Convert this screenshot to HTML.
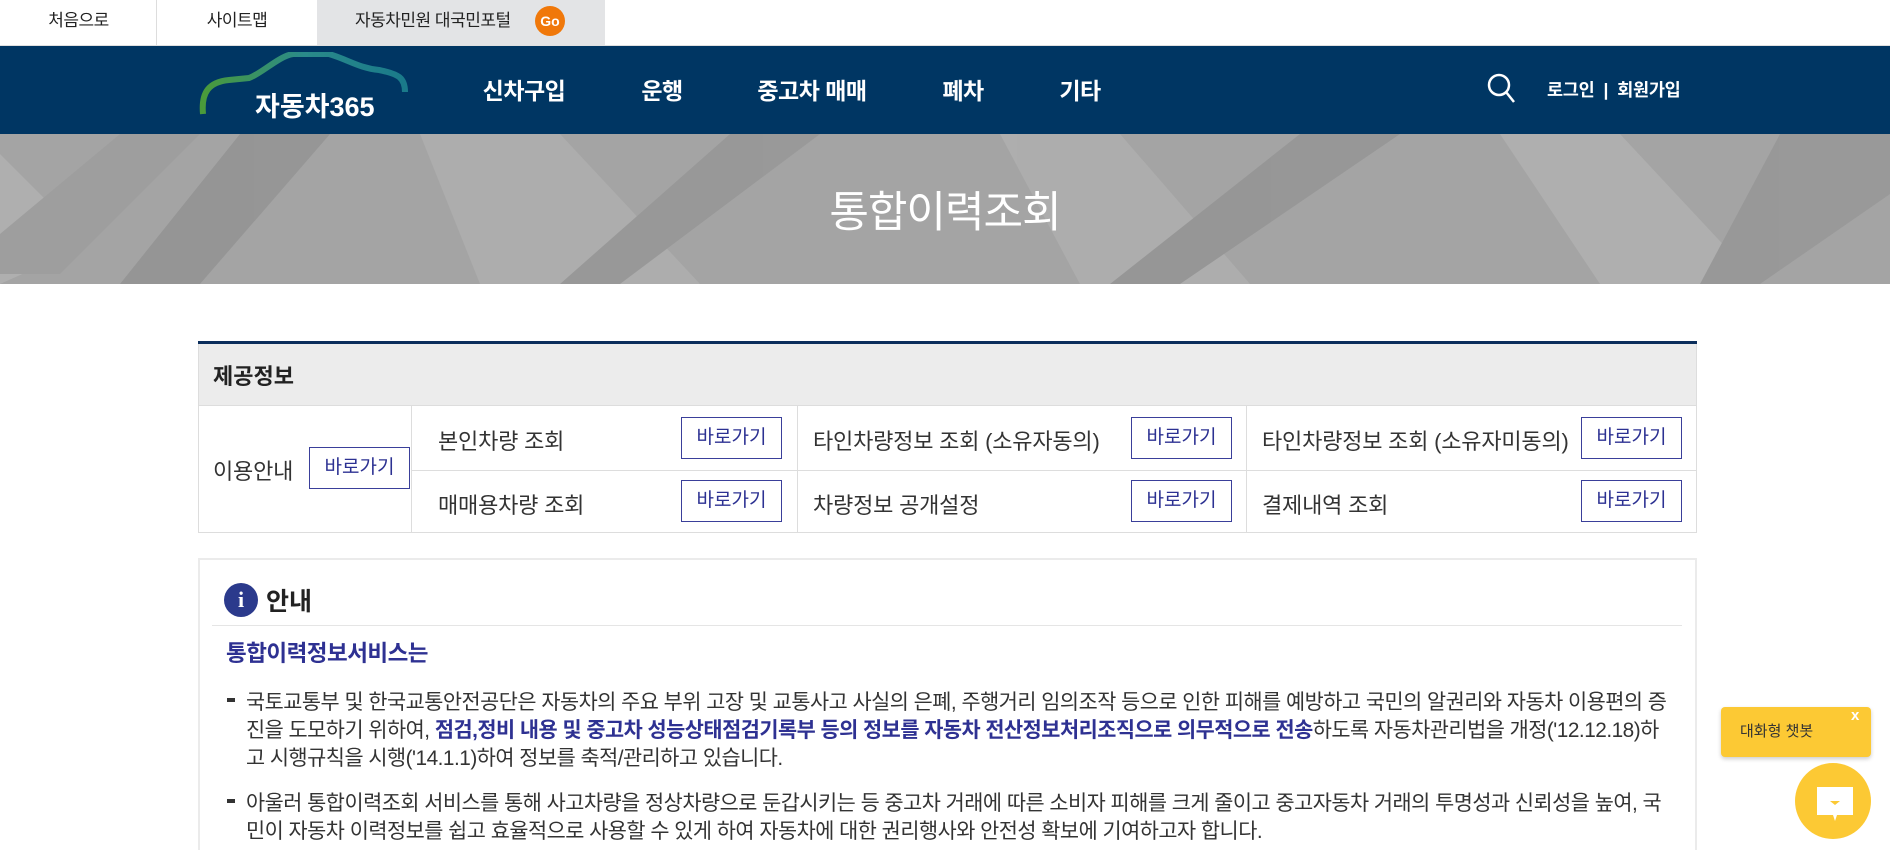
<!DOCTYPE html>
<html style="height:850px;overflow:hidden"><head><meta charset="utf-8"><style>
*{margin:0;padding:0;box-sizing:border-box}
body{width:1890px;height:850px;overflow:hidden;background:#fff;font-family:"Liberation Sans","Noto Sans CJK KR",sans-serif;color:#333;position:relative}
.abs{position:absolute}
.top{height:46px;width:1890px;border-bottom:1px solid #e0e0e0}
.tab{position:absolute;top:0;height:45px;line-height:42px;text-align:center;font-size:17px;color:#222;letter-spacing:-0.5px}
.nav{top:46px;left:0;width:1890px;height:88px;background:#003663}
.menu{position:absolute;top:26px;font-size:23px;font-weight:bold;color:#fff;letter-spacing:-0.5px;transform:translateX(-50%);white-space:nowrap}
.banner{top:134px;left:0;width:1890px;height:150px;background:#a4a4a4;overflow:hidden}
.t{position:absolute;white-space:nowrap}
.btn{position:absolute;width:101px;height:42px;border:1px solid #3a3f9a;color:#2c3192;font-size:19px;text-align:center;line-height:40px;background:#fff}
.cell{font-size:22px;color:#333;letter-spacing:-0.2px}
p.l{position:absolute;left:246px;font-size:20.8px;letter-spacing:-0.5px;white-space:nowrap;color:#333}
b.n{color:#2e3192}
</style></head><body>
<div class="abs top"></div>
<div class="tab" style="left:0;width:157px">처음으로</div>
<div class="abs" style="left:156px;top:0;width:1px;height:45px;background:#ddd"></div>
<div class="tab" style="left:157px;width:160px">사이트맵</div>
<div class="tab" style="left:317px;width:288px;background:#e3e4e6;text-align:left;padding-left:38px">자동차민원 대국민포털</div>
<div class="abs" style="left:535px;top:6px;width:30px;height:30px;border-radius:50%;background:#f0780a;color:#fff;font-weight:bold;font-size:14px;text-align:center;line-height:30px">Go</div>

<div class="abs nav">
<svg class="abs" style="left:199px;top:6px" width="215" height="80" viewBox="0 0 215 80">
<defs><linearGradient id="g" x1="0" x2="1"><stop offset="0" stop-color="#4a9a3a"/><stop offset=".5" stop-color="#2a8a8a"/><stop offset="1" stop-color="#1a7a8a"/></linearGradient></defs>
<path d="M4 62 C2 40 10 30 30 28 L50 26 C62 22 80 4 94 2 L130 2 C150 8 160 16 180 18 C200 22 206 26 206 40" fill="none" stroke="url(#g)" stroke-width="6"/>
<text x="56" y="64" font-family="Liberation Sans,Noto Sans CJK KR,sans-serif" font-weight="bold" font-size="27" fill="#fff">자동차365</text>
</svg>
<div class="menu" style="left:524px">신차구입</div>
<div class="menu" style="left:662px">운행</div>
<div class="menu" style="left:812px">중고차 매매</div>
<div class="menu" style="left:963px">폐차</div>
<div class="menu" style="left:1080px">기타</div>
<svg class="abs" style="left:1486px;top:26px" width="32" height="32" viewBox="0 0 32 32"><circle cx="13" cy="13" r="10" fill="none" stroke="#fff" stroke-width="2.5"/><path d="M20 20 L28 30" stroke="#fff" stroke-width="2.5"/></svg>
<div class="abs" style="left:1547px;top:31px;font-size:17.5px;font-weight:bold;color:#fff;white-space:nowrap;letter-spacing:-0.3px">로그인 &nbsp;|&nbsp; 회원가입</div>
</div>

<div class="abs banner">
<svg width="1890" height="150" style="position:absolute;left:0;top:0">
<g opacity=".55">
<polygon points="0,20 90,110 0,150" fill="#b8b8b8"/>
<polygon points="240,0 330,0 200,150 120,150" fill="#8a8a8a"/>
<polygon points="420,0 560,0 700,150 480,150" fill="#b5b5b5"/>
<polygon points="730,0 820,0 620,150 560,150" fill="#909090"/>
<polygon points="1000,0 1120,0 1250,150 1080,150" fill="#b6b6b6"/>
<polygon points="1300,0 1400,0 1180,150 1110,150" fill="#8c8c8c"/>
<polygon points="1500,0 1620,0 1760,150 1600,150" fill="#b8b8b8"/>
<polygon points="1780,0 1890,0 1890,60 1760,150 1700,150" fill="#909090"/>
<polygon points="120,0 200,0 60,140 0,140 0,100" fill="#9a9a9a"/>
</g>
</svg>
<div class="t" style="left:0;width:1890px;text-align:center;top:44px;font-size:43px;color:#fff;letter-spacing:-1px">통합이력조회</div>
</div>

<!-- table -->
<div class="abs" style="left:198px;top:341px;width:1499px;height:3px;background:#0b2e5c"></div>
<div class="abs" style="left:198px;top:344px;width:1499px;height:189px;border:1px solid #ddd;border-top:none"></div>
<div class="abs" style="left:199px;top:344px;width:1497px;height:62px;background:#ececec;border-bottom:1px solid #ddd"></div>
<div class="t" style="left:213px;top:359px;font-size:22px;font-weight:bold;color:#222">제공정보</div>
<div class="abs" style="left:411px;top:406px;width:1px;height:127px;background:#ddd"></div>
<div class="abs" style="left:797px;top:406px;width:1px;height:127px;background:#ddd"></div>
<div class="abs" style="left:1246px;top:406px;width:1px;height:127px;background:#ddd"></div>
<div class="abs" style="left:411px;top:470px;width:1286px;height:1px;background:#ddd"></div>
<div class="t cell" style="left:213px;top:454px">이용안내</div>
<div class="btn" style="left:309px;top:447px">바로가기</div>
<div class="t cell" style="left:438px;top:424px">본인차량 조회</div>
<div class="btn" style="left:681px;top:417px">바로가기</div>
<div class="t cell" style="left:438px;top:488px">매매용차량 조회</div>
<div class="btn" style="left:681px;top:480px">바로가기</div>
<div class="t cell" style="left:813px;top:424px">타인차량정보 조회 (소유자동의)</div>
<div class="btn" style="left:1131px;top:417px">바로가기</div>
<div class="t cell" style="left:813px;top:488px">차량정보 공개설정</div>
<div class="btn" style="left:1131px;top:480px">바로가기</div>
<div class="t cell" style="left:1262px;top:424px">타인차량정보 조회 (소유자미동의)</div>
<div class="btn" style="left:1581px;top:417px">바로가기</div>
<div class="t cell" style="left:1262px;top:488px">결제내역 조회</div>
<div class="btn" style="left:1581px;top:480px">바로가기</div>

<!-- info -->
<div class="abs" style="left:198px;top:558px;width:1499px;height:292px;border:2px solid #ebebeb;border-bottom:none"></div>
<div class="abs" style="left:224px;top:583px;width:34px;height:34px;border-radius:50%;background:#2b3a8c;color:#fff;font-weight:bold;font-size:22px;text-align:center;line-height:34px;font-family:'Liberation Serif',serif">i</div>
<div class="t" style="left:266px;top:582px;font-size:25px;font-weight:bold;color:#222">안내</div>
<div class="abs" style="left:212px;top:625px;width:1470px;height:1px;background:#e5e5e5"></div>
<div class="t" style="left:226px;top:636px;font-size:22.5px;font-weight:bold;color:#2e3192;letter-spacing:-0.5px">통합이력정보서비스는</div>
<div class="abs" style="left:227px;top:698px;width:8px;height:4px;background:#333"></div>
<p class="l" style="top:685px">국토교통부 및 한국교통안전공단은 자동차의 주요 부위 고장 및 교통사고 사실의 은폐, 주행거리 임의조작 등으로 인한 피해를 예방하고 국민의 알권리와 자동차 이용편의 증</p>
<p class="l" style="top:713px">진을 도모하기 위하여, <b class="n">점검,정비 내용 및 중고차 성능상태점검기록부 등의 정보를 자동차 전산정보처리조직으로 의무적으로 전송</b>하도록 자동차관리법을 개정('12.12.18)하</p>
<p class="l" style="top:741px">고 시행규칙을 시행('14.1.1)하여 정보를 축적/관리하고 있습니다.</p>
<div class="abs" style="left:227px;top:799px;width:8px;height:4px;background:#333"></div>
<p class="l" style="top:786px">아울러 통합이력조회 서비스를 통해 사고차량을 정상차량으로 둔갑시키는 등 중고차 거래에 따른 소비자 피해를 크게 줄이고 중고자동차 거래의 투명성과 신뢰성을 높여, 국</p>
<p class="l" style="top:814px">민이 자동차 이력정보를 쉽고 효율적으로 사용할 수 있게 하여 자동차에 대한 권리행사와 안전성 확보에 기여하고자 합니다.</p>

<!-- chatbot -->
<div class="abs" style="left:1721px;top:707px;width:150px;height:50px;background:#fcc934;border-radius:4px;box-shadow:0 2px 4px rgba(0,0,0,.2)"></div>
<div class="t" style="left:1740px;top:720px;font-size:15px;color:#333">대화형 챗봇</div>
<div class="t" style="left:1851px;top:707px;font-size:15px;color:#fff;font-weight:bold">x</div>
<div class="abs" style="left:1795px;top:763px;width:76px;height:76px;border-radius:50%;background:#fcc934"></div>
<svg class="abs" style="left:1815px;top:785px" width="40" height="40" viewBox="0 0 40 40"><path d="M2 2 H38 V30 H22 L20 36 L18 30 H2 Z" fill="#fff"/><path d="M15 16 H25 L20 20 Z" fill="#fcc934"/></svg>
</body></html>
